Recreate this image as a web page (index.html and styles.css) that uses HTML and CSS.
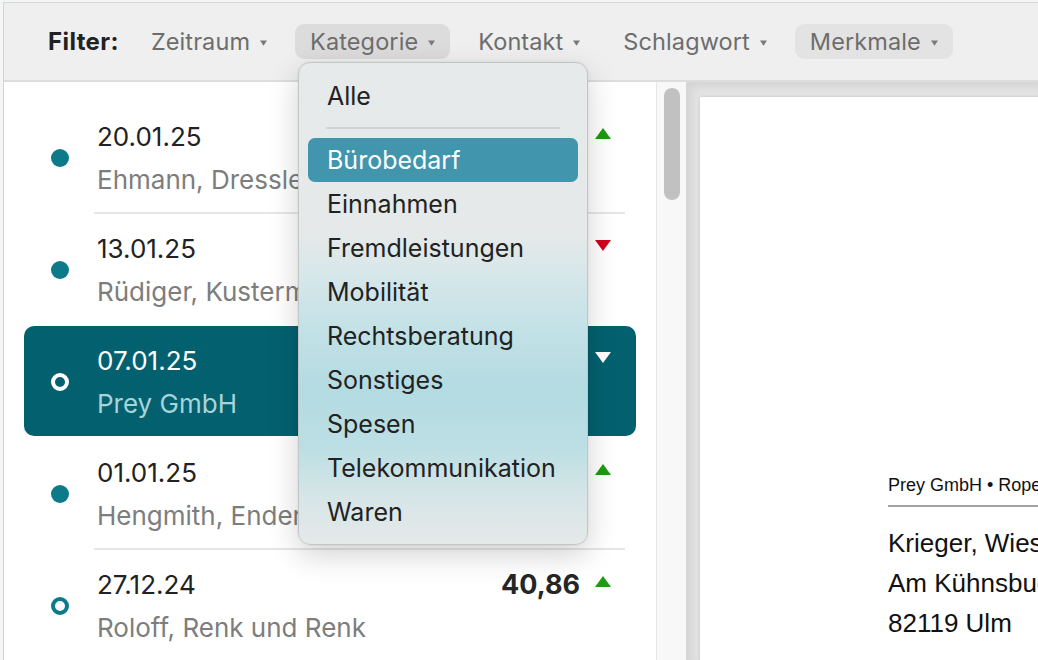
FILE: index.html
```html
<!DOCTYPE html>
<html lang="de">
<head>
<meta charset="utf-8">
<title>Belege</title>
<link rel="stylesheet" href="styles.css">
</head>
<body>
<div class="app">
  <header class="toolbar">
    <span class="label">Filter:</span>
    <button class="filter">Zeitraum<svg class="caret" viewBox="0 0 8 6"><polygon points="0,0 8,0 4,6"/></svg></button>
    <button class="filter active">Kategorie<svg class="caret" viewBox="0 0 8 6"><polygon points="0,0 8,0 4,6"/></svg></button>
    <button class="filter">Kontakt<svg class="caret" viewBox="0 0 8 6"><polygon points="0,0 8,0 4,6"/></svg></button>
    <button class="filter">Schlagwort<svg class="caret" viewBox="0 0 8 6"><polygon points="0,0 8,0 4,6"/></svg></button>
    <button class="filter set">Merkmale<svg class="caret" viewBox="0 0 8 6"><polygon points="0,0 8,0 4,6"/></svg></button>
  </header>
  <div class="main">
    <div class="list-pane">
      <div class="row">
        <span class="dot"></span>
        <div class="body">
          <div class="line1"><span class="date">20.01.25</span><span class="amount">128,40</span><svg class="tri up" viewBox="0 0 16 11"><polygon points="8,0 16,11 0,11"/></svg></div>
          <div class="name">Ehmann, Dressler und Partner</div>
        </div>
      </div>
      <div class="sep"></div>
      <div class="row">
        <span class="dot"></span>
        <div class="body">
          <div class="line1"><span class="date">13.01.25</span><span class="amount">312,00</span><svg class="tri down" viewBox="0 0 16 11"><polygon points="0,0 16,0 8,11"/></svg></div>
          <div class="name">Rüdiger, Kustermann KG</div>
        </div>
      </div>
      <div class="sep hidden"></div>
      <div class="row selected">
        <span class="dot ring"></span>
        <div class="body">
          <div class="line1"><span class="date">07.01.25</span><span class="amount">89,90</span><svg class="tri down" viewBox="0 0 16 11"><polygon points="0,0 16,0 8,11"/></svg></div>
          <div class="name">Prey GmbH</div>
        </div>
      </div>
      <div class="sep hidden"></div>
      <div class="row">
        <span class="dot"></span>
        <div class="body">
          <div class="line1"><span class="date">01.01.25</span><span class="amount">64,12</span><svg class="tri up" viewBox="0 0 16 11"><polygon points="8,0 16,11 0,11"/></svg></div>
          <div class="name">Hengmith, Ender und Söhne</div>
        </div>
      </div>
      <div class="sep"></div>
      <div class="row">
        <span class="dot ring"></span>
        <div class="body">
          <div class="line1"><span class="date">27.12.24</span><span class="amount">40,86</span><svg class="tri up" viewBox="0 0 16 11"><polygon points="8,0 16,11 0,11"/></svg></div>
          <div class="name">Roloff, Renk und Renk</div>
        </div>
      </div>
    </div>
    <div class="scrollbar"><div class="thumb"></div></div>
    <div class="doc-pane">
      <div class="page">
        <div class="sender">Prey GmbH • Roperstraße 14 • 89073 Ulm</div>
        <div class="address">
          <div>Krieger, Wiesner und Co.</div>
          <div>Am Kühnsbuck 7</div>
          <div>82119 Ulm</div>
        </div>
      </div>
    </div>
  </div>
</div>
<div class="dropdown">
  <div class="item">Alle</div>
  <div class="divider"></div>
  <div class="item hl">Bürobedarf</div>
  <div class="item">Einnahmen</div>
  <div class="item">Fremdleistungen</div>
  <div class="item">Mobilität</div>
  <div class="item">Rechtsberatung</div>
  <div class="item">Sonstiges</div>
  <div class="item">Spesen</div>
  <div class="item">Telekommunikation</div>
  <div class="item">Waren</div>
</div>
</body>
</html>
```
FILE: styles.css
```css
* { box-sizing: border-box; }
html, body { margin: 0; height: 100%; }
body {
  background: #f4f6f5;
  padding: 2px 0 0 3px;
  font-family: Inter, "Noto Sans", sans-serif;
  overflow: hidden;
}
.app {
  height: 658px;
  border-top: 1px solid #d8d8d8;
  border-left: 1px solid #d4d4d4;
  display: flex;
  flex-direction: column;
  background: #fff;
  overflow: hidden;
}
.toolbar {
  flex: none;
  height: 79px;
  background: #efefef;
  border-bottom: 2px solid #dddddd;
  display: flex;
  align-items: center;
  padding: 0 0 0 44px;
  gap: 13px;
}
.label {
  font-weight: 700;
  font-size: 24px;
  letter-spacing: 0.4px;
  color: #222;
  margin-right: 4px;
}
.filter {
  font-family: inherit;
  font-size: 23.5px;
  letter-spacing: 0.1px;
  color: #6d6d6d;
  background: transparent;
  border: 0;
  height: 35px;
  padding: 0 15px;
  border-radius: 9px;
  display: flex;
  align-items: center;
  gap: 10px;
}
.filter.active { background: #dcdcdc; }
.filter.set { background: #e3e3e3; }
.caret { width: 7px; height: 6px; fill: #7a7a7a; margin-top: 2px; }

.main { flex: 1; display: flex; min-height: 0; }
.list-pane {
  width: 652px;
  flex: none;
  padding: 20px 20px 0 20px;
  overflow: hidden;
}
.row {
  height: 110px;
  display: flex;
  align-items: flex-start;
  padding: 12px 25px 0 27px;
  border-radius: 10px;
}
.dot {
  flex: none;
  width: 18px;
  height: 18px;
  border-radius: 50%;
  background: #0d7a89;
  margin-top: 35px;
  margin-right: 28px;
}
.dot.ring { background: transparent; border: 4px solid #0d7a89; }
.body { flex: 1; min-width: 0; }
.line1 {
  display: flex;
  align-items: center;
  height: 44px;
}
.date { font-size: 26px; color: #222; flex: 1; }
.amount { font-size: 27px; font-weight: 700; color: #262626; margin-right: 15px; }
.tri { width: 16px; height: 11px; margin-bottom: 5px; }
.tri.up { fill: #1f9a12; }
.tri.down { fill: #d0021b; }
.name {
  font-size: 26px;
  line-height: 44px;
  color: #7d7d7d;
  white-space: nowrap;
  overflow: hidden;
}
.sep { height: 2px; background: #e6e6e6; margin: 0 11px 0 70px; }
.sep.hidden { background: transparent; }
.row.selected { background: #03616f; }
.row.selected .date { color: #fff; }
.row.selected .name { color: #a7d3da; }
.row.selected .dot.ring { border-color: #fff; }
.row.selected .tri.down { fill: #fff; }

.scrollbar {
  width: 30px;
  flex: none;
  background: #f8f8f8;
  border-left: 1px solid #e6e6e6;
  padding: 6px 0 0 7px;
}
.thumb { width: 16px; height: 112px; border-radius: 8px; background: #c1c1c1; }

.doc-pane {
  flex: 1;
  background: #e4e4e4;
  border-left: 1px solid #d6d6d6;
  box-shadow: inset 5px 5px 8px rgba(0,0,0,0.07);
  padding: 15px 0 0 13px;
  overflow: hidden;
}
.page {
  background: #fff;
  width: 600px;
  height: 900px;
  box-shadow: 0 0 3px rgba(0,0,0,0.15);
  padding: 377px 0 0 188px;
  font-family: "Liberation Sans", Arial, sans-serif;
  color: #111;
}
.sender {
  font-size: 18px;
  line-height: 22px;
  white-space: nowrap;
  width: 400px;
  padding-bottom: 9px;
  border-bottom: 2px solid #a3a3a3;
}
.address {
  margin-top: 16px;
  font-size: 26px;
  line-height: 40px;
  white-space: nowrap;
}

.dropdown {
  position: absolute;
  left: 298px;
  top: 62px;
  width: 290px;
  height: 483px;
  border: 1px solid #c3c6c6;
  border-radius: 12px;
  padding: 11px 0 10px;
  background: linear-gradient(to bottom, #e7eaea 0%, #e5e9e9 36%, #d3e6e9 46%, #bfe0e5 58%, #b3dbe1 68%, #bcdfe4 80%, #d6e5e7 90%, #e5e9e9 100%);
  box-shadow: 0 10px 30px rgba(0,0,0,0.18), 0 0 2px rgba(0,0,0,0.1);
  font-size: 25px;
  color: #222;
}
.item {
  height: 44px;
  line-height: 44px;
  margin: 0 9px;
  padding-left: 19px;
  border-radius: 7px;
  white-space: nowrap;
}
.item.hl { background: #4195ac; color: #fff; }
.divider {
  height: 20px;
  margin: 0 27px;
  display: flex;
  align-items: center;
}
.divider::before {
  content: "";
  display: block;
  width: 100%;
  height: 2px;
  background: #cfd3d3;
}
```
